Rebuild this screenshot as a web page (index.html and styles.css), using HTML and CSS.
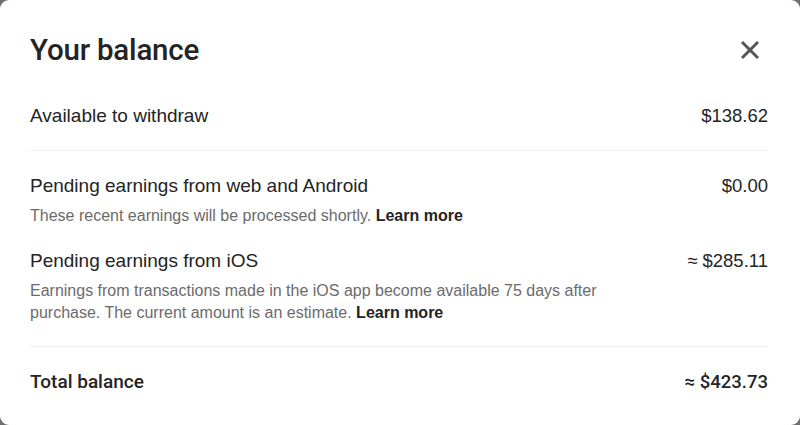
FILE: index.html
```html
<!DOCTYPE html>
<html>
<head>
<meta charset="utf-8">
<link rel="stylesheet" href="styles.css">
</head>
<body>
<div class="modal">
  <div class="header">
    <h1 class="title">Your balance</h1>
    <button class="close" aria-label="Close">
      <svg width="20" height="20" viewBox="0 0 20 20"><path d="M2 2 L18 18 M18 2 L2 18" stroke="#555" stroke-width="3" stroke-linecap="butt" fill="none"/></svg>
    </button>
  </div>
  <div class="section first">
    <div class="row">
      <span class="label">Available to withdraw</span>
      <span class="amount">$138.62</span>
    </div>
  </div>
  <div class="section middle">
    <div class="item">
      <div class="row">
        <span class="label">Pending earnings from web and Android</span>
        <span class="amount">$0.00</span>
      </div>
      <p class="note"><span>These recent earnings will be processed shortly.</span> <a class="link">Learn more</a></p>
    </div>
    <div class="item">
      <div class="row">
        <span class="label">Pending earnings from iOS</span>
        <span class="amount">≈ $285.11</span>
      </div>
      <p class="note wide"><span>Earnings from transactions made in the iOS app become available 75 days after purchase. The current amount is an estimate.</span> <a class="link">Learn more</a></p>
    </div>
  </div>
  <div class="section total">
    <div class="row">
      <span class="label strong">Total balance</span>
      <span class="amount strong">≈ $423.73</span>
    </div>
  </div>
</div>
</body>
</html>
```

FILE: styles.css
```css
* { box-sizing: border-box; }
html, body {
  margin: 0;
  padding: 0;
  background: #6e6e6e;
}
body {
  font-family: "Liberation Sans", Arial, sans-serif;
  color: #242424;
}
.modal {
  width: 800px;
  height: 425px;
  background: #fff;
  border-radius: 9px;
  padding: 30px 32px 0 30px;
  overflow: hidden;
}
.header {
  display: flex;
  justify-content: space-between;
  align-items: center;
  height: 40px;
}
.title {
  margin: 0;
  font-family: Roboto, "Liberation Sans", sans-serif;
  font-size: 29.5px;
  font-weight: 500;
  line-height: 40px;
  letter-spacing: -0.2px;
}
.close {
  border: 0;
  background: none;
  padding: 0;
  width: 20px;
  height: 20px;
  margin-right: 8px;
  display: flex;
}
.section {
  border-bottom: 1px solid #f0f0f0;
}
.section.first {
  padding: 34px 0 22px;
}
.section.middle {
  padding: 23px 0 22px;
  display: flex;
  flex-direction: column;
  gap: 22px;
}
.section.total {
  border-bottom: 0;
  padding-top: 23px;
}
.row {
  display: flex;
  justify-content: space-between;
  align-items: center;
  line-height: 24px;
}
.label {
  font-size: 19px;
}
.amount {
  font-size: 18.5px;
}
.note {
  margin: 7px 0 0;
  font-size: 16px;
  line-height: 22px;
  color: #6b6b6b;
}
.note.wide { max-width: 600px; }
.link {
  color: #242424;
  font-weight: 700;
}
.strong {
  font-family: Roboto, "Liberation Sans", sans-serif;
  font-weight: 500;
}
```
